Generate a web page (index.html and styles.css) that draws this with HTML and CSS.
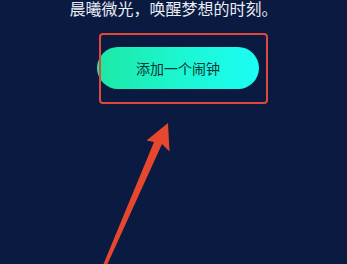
FILE: index.html
```html
<!DOCTYPE html>
<html lang="zh">
<head>
<meta charset="utf-8">
<link rel="stylesheet" href="styles.css">
</head>
<body>
<div class="page">
  <p class="headline">晨曦微光，唤醒梦想的时刻。</p>
  <button class="add-btn">添加一个闹钟</button>
  <svg class="annot" width="347" height="264" viewBox="0 0 347 264">
    <rect x="100" y="34" width="167" height="69" rx="3" ry="3" fill="none" stroke="#e0483a" stroke-width="2"/>
    <polygon points="168,123 169.5,151.5 162,144 107.5,264 103.5,264 154,142 146.5,140.5" fill="#e8472f"/>
  </svg>
</div>
</body>
</html>
```
FILE: styles.css
```css
html, body {
  margin: 0;
  padding: 0;
  background: #0a1a41;
}
.page {
  position: relative;
  width: 347px;
  height: 264px;
  overflow: hidden;
  display: flex;
  flex-direction: column;
  align-items: flex-start;
  font-family: "Noto Sans CJK SC", "Noto Sans", sans-serif;
}
.headline {
  margin: 0;
  width: 100%;
  text-align: center;
  font-size: 16px;
  line-height: 16px;
  color: #e9edf4;
}
.add-btn {
  margin: 31px 0 0 97px;
  width: 162px;
  height: 42px;
  border: none;
  border-radius: 21px;
  padding: 0;
  background: linear-gradient(90deg, #1de8a4 0%, #1cf6d0 50%, #1bfdf5 100%);
  color: #0c3434;
  font-family: "Noto Sans CJK SC", "Noto Sans", sans-serif;
  font-size: 14px;
  line-height: 42px;
}
.annot {
  position: absolute;
  left: 0;
  top: 0;
}
```
